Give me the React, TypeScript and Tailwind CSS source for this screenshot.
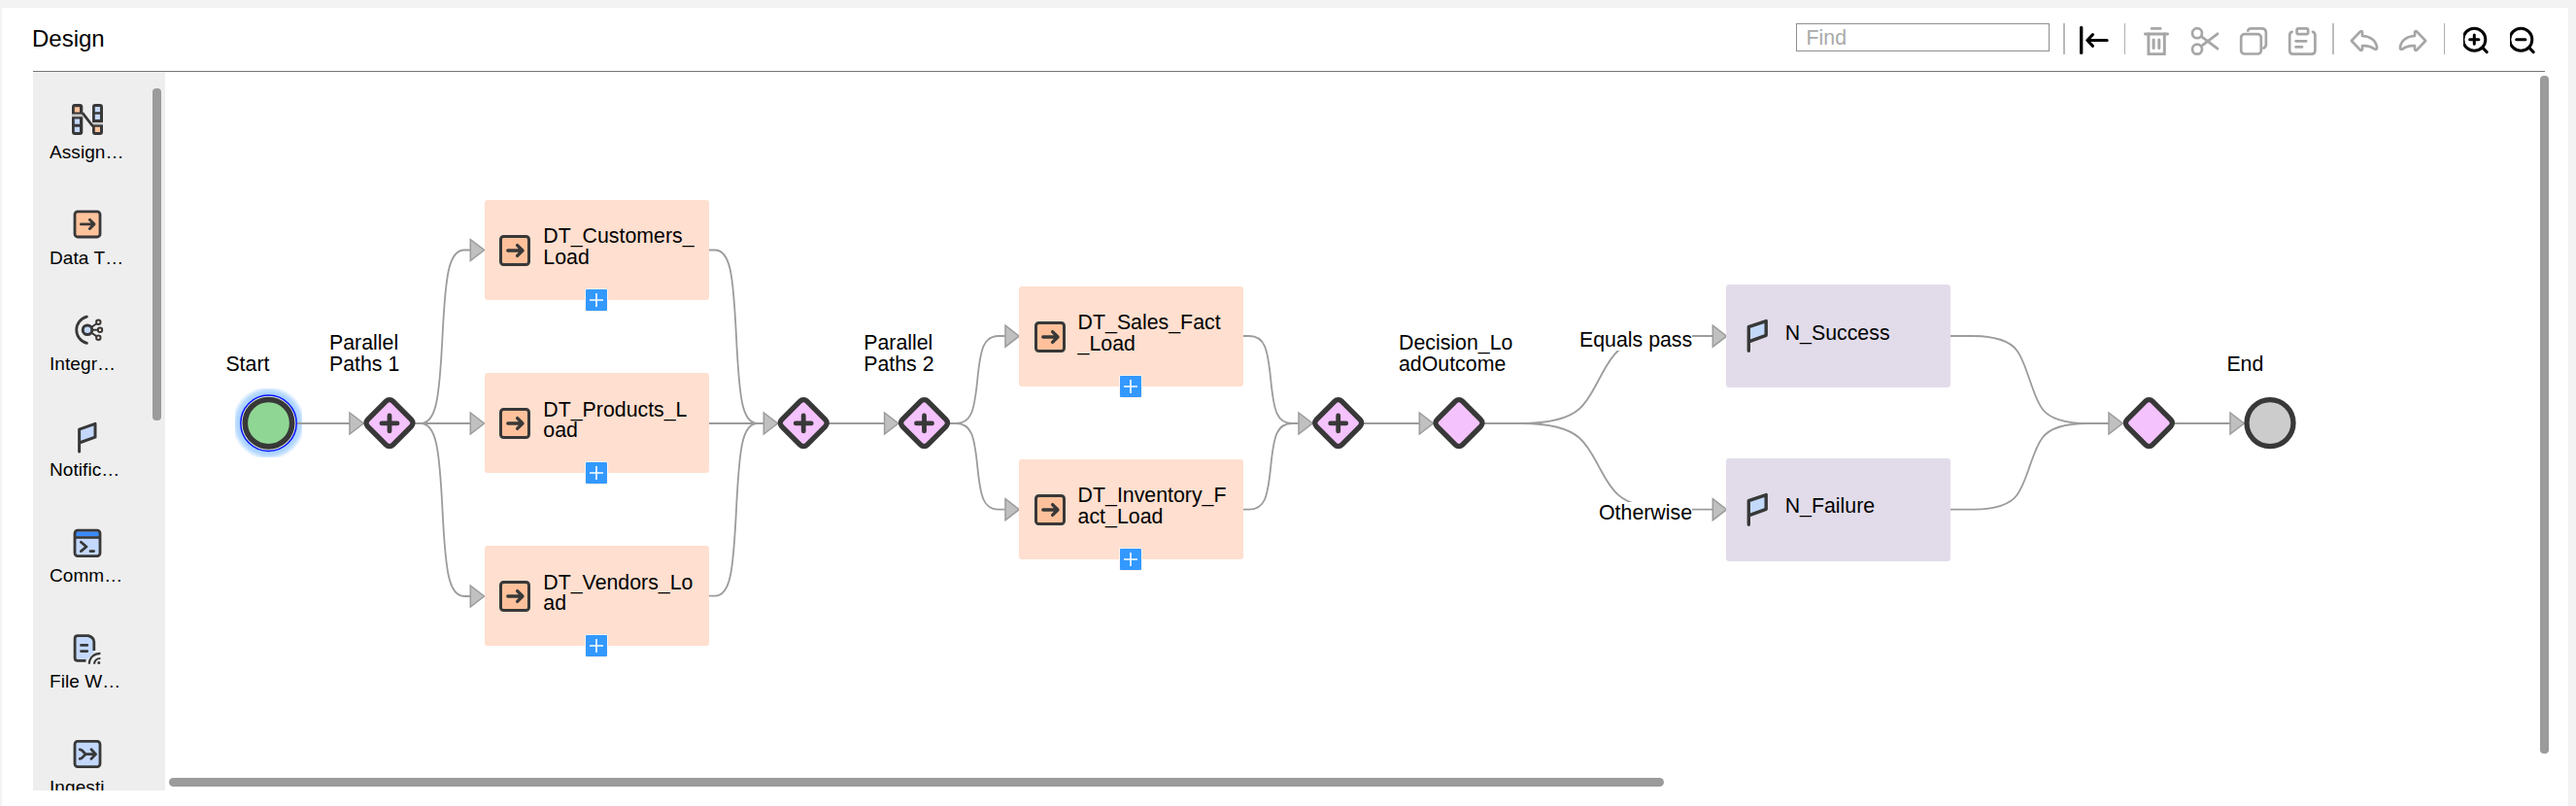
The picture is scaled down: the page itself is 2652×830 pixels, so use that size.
import type { ReactNode } from "react";

const DARK = "#383838";
const LINE = "#9c9c9c";

/* Canvas origin inside the page; diagram data uses page coordinates. */
const OX = 170;
const OY = 74;
const MID = 436;

/* ---------- toolbar ---------- */

function Tool({ label, muted, children }: { label: string; muted?: boolean; children: ReactNode }) {
  return (
    <button aria-label={label} className={muted ? "mt-0.5 h-8 w-8 shrink-0 text-[#a6a6a6]" : "mt-0.5 h-8 w-8 shrink-0 text-black"}>
      <svg className="block h-8 w-8" viewBox="0 0 32 32" fill="none" stroke="currentColor" strokeWidth="2.7" strokeLinecap="round" strokeLinejoin="round">
        {children}
      </svg>
    </button>
  );
}

const replyArrow =
  "M2.9 16 L12 6.4 Q13.7 5.6 14 7.4 V11 C22 11.3 28 15.5 29 22.5 C29.2 24.8 28 25.4 26.4 24.4 C23 21.8 19 20.8 14 21.2 V24.6 Q13.7 26.4 12 25.6 Z";

function Toolbar() {
  return (
    <div className="flex items-start">
      <input
        className="h-[29px] w-[261px] border border-[#8f8f8f] bg-white pt-px pl-[9.5px] text-[21.33px] leading-[26px] placeholder:text-[#a9a9a9] placeholder:opacity-100"
        placeholder="Find"
      />
      <div className="mr-3.5 ml-3.5 h-8 w-0.5 bg-[#b8b8b8]" />
      <Tool label="Collapse">
        <path d="M2.7 2.4V28.4" strokeWidth="3.3" />
        <path d="M9 15.5H29.2M14.5 9.6L8.8 15.5L14.5 21.4" strokeWidth="3" />
      </Tool>
      <div className="mr-4 ml-[15px] h-8 w-px bg-[#b0b0b0]" />
      <div className="flex gap-[18px]">
        <Tool label="Delete" muted>
          <path d="M11.2 3.4H20.2M4.4 9H27.6" strokeWidth="2.8" />
          <path d="M7.9 9V29.6H24.3V9" strokeLinejoin="miter" strokeWidth="2.9" />
          <path d="M13.1 15V23.6M18.8 15V23.6" strokeWidth="3" />
        </Tool>
        <Tool label="Cut" muted>
          <circle cx="8" cy="8.2" r="5" />
          <circle cx="8" cy="24.7" r="5" />
          <path d="M12.4 11.6L29 24.2M12.4 21.4L29 8.8" />
        </Tool>
        <Tool label="Copy" muted>
          <rect x="3.2" y="9.1" width="20.6" height="20.4" rx="3.6" />
          <path d="M10.2 5.6Q11 3.4 13.5 3.4H24.5Q28.9 3.4 28.9 7.8V19.6Q28.9 22.6 26.4 23.6" />
        </Tool>
        <Tool label="Paste" muted>
          <path d="M5.6 6.8Q3.2 7.6 3.2 10.6V26Q3.2 29.6 6.8 29.6H25.8Q29.4 29.6 29.4 26V10.6Q29.4 7.6 27 6.8" />
          <rect x="10.6" y="3.4" width="11.6" height="5.8" rx="1.6" />
          <path d="M9.6 16.4H20.2M9.6 22.4H16" />
        </Tool>
      </div>
      <div className="mr-[15px] ml-[15px] h-8 w-0.5 bg-[#bcbcbc]" />
      <div className="flex gap-[18px]">
        <Tool label="Undo" muted>
          <path d={replyArrow} />
        </Tool>
        <Tool label="Redo" muted>
          <path d={replyArrow} transform="translate(32 0) scale(-1 1)" />
        </Tool>
      </div>
      <div className="mr-[19px] ml-4 h-8 w-px bg-[#b0b0b0]" />
      <div className="flex gap-4 pr-1">
        <Tool label="Zoom in">
          <circle cx="11.3" cy="14.7" r="11.5" strokeWidth="3" />
          <path d="M20 23.4L24.2 27.6M6.7 14.7H15.9M11.3 10.1V19.3" strokeWidth="3" />
        </Tool>
        <Tool label="Zoom out">
          <circle cx="11.3" cy="14.7" r="11.5" strokeWidth="3" />
          <path d="M20 23.4L24.2 27.6M6.7 14.7H15.9" strokeWidth="3" />
        </Tool>
      </div>
    </div>
  );
}

/* ---------- palette ---------- */

const palette: { name: string; icon: ReactNode }[] = [
  {
    name: "Assign…",
    icon: (
      <>
        <rect x="2" y="12" width="11" height="4" fill="#c6c6c6" />
        <rect x="23" y="20.6" width="11" height="4" fill="#c6c6c6" />
        <path d="M2 12.4V5Q2 2 5 2H10.3Q13.3 2 13.3 5V12.4ZM2 15.2H13.3V31Q13.3 34 10.3 34H5Q2 34 2 31ZM23 21V5Q23 2 26 2H31Q34 2 34 5V21ZM23 23.6H34V31Q34 34 31 34H26Q23 34 23 31Z" fill={DARK} />
        <path d="M13 11.4L23.5 25" stroke={DARK} strokeWidth="2.8" />
        <path d="M4.8 5.3h5.2v5.2H4.8zM25.8 25.8h5.2v5.2h-5.2z" fill="#ffc39c" />
        <path d="M4.8 17.6h5.2v5.2H4.8zM4.8 25.8h5.2v5.2H4.8zM25.8 5h5.2v5.2h-5.2zM25.8 12.8h5.2v5.2h-5.2z" fill="#c3d8fb" />
      </>
    ),
  },
  {
    name: "Data T…",
    icon: (
      <>
        <rect x="5" y="3.8" width="26" height="26.2" rx="3" fill="#ffc39c" stroke={DARK} strokeWidth="2.8" />
        <path d="M11.4 16.9H24.5M20.4 12.3L25 16.9L20.4 21.5" stroke={DARK} strokeWidth="2.9" strokeLinecap="round" strokeLinejoin="round" />
      </>
    ),
  },
  {
    name: "Integr…",
    icon: (
      <>
        <path d="M17.4 3.2A14 14 0 0 0 17.4 30.4" stroke={DARK} strokeWidth="2.8" strokeLinecap="round" />
        <path d="M18 16.8L29.3 9M18 16.8H31M18 16.8L29.3 24.6" stroke={DARK} strokeWidth="2" />
        <circle cx="18" cy="16.8" r="4.8" fill="#c3d8fb" stroke={DARK} strokeWidth="3" />
        <g fill="#ffe8dc" stroke={DARK} strokeWidth="2">
          <circle cx="29.3" cy="8.8" r="2.2" />
          <circle cx="31" cy="16.8" r="2.2" />
          <circle cx="29.3" cy="24.7" r="2.2" />
        </g>
      </>
    ),
  },
  {
    name: "Notific…",
    icon: (
      <path d="M9.6 33V10.2L26 4.3V18.2L9.6 24" fill="#c3d8fb" stroke={DARK} strokeWidth="3" strokeLinecap="round" strokeLinejoin="round" />
    ),
  },
  {
    name: "Comm…",
    icon: (
      <>
        <rect x="5" y="5.2" width="26" height="26.4" rx="3" fill="#c3d8fb" />
        <rect x="6" y="6.4" width="24" height="5" fill="#3a8bff" />
        <path d="M5 12.5H31" stroke={DARK} strokeWidth="2.6" />
        <rect x="5" y="5.2" width="26" height="26.4" rx="3" stroke={DARK} strokeWidth="2.8" />
        <path d="M11.4 17.2L17 22L11.4 26.6M21 26.6H24.6" stroke={DARK} strokeWidth="2.8" strokeLinecap="round" strokeLinejoin="round" />
      </>
    ),
  },
  {
    name: "File W…",
    icon: (
      <>
        <path d="M8 4.6H19.5L24.8 10V22L16 30.4H8Q5.1 30.4 5.1 27.5V7.5Q5.1 4.6 8 4.6Z" fill="#c3d8fb" />
        <path d="M16.5 30.4H8Q5.1 30.4 5.1 27.5V7.5Q5.1 4.6 8 4.6H19Q24.8 6.5 24.8 11V20" stroke={DARK} strokeWidth="2.8" />
        <path d="M11.5 14.4H17.8M11.5 20.6H17.8" stroke={DARK} strokeWidth="2.8" strokeLinecap="round" />
        <path d="M19.8 33.8C20 27 25 22.8 31.4 22.8M25 33.8C25.2 30.2 28 28 31.4 28" stroke={DARK} strokeWidth="2.2" />
        <circle cx="29.8" cy="32.4" r="1.5" fill={DARK} />
      </>
    ),
  },
  {
    name: "Ingesti…",
    icon: (
      <>
        <rect x="5" y="4.4" width="26" height="26.2" rx="3" fill="#c3d8fb" stroke={DARK} strokeWidth="2.8" />
        <path d="M10.2 12.8C14 12.8 14 17.6 17 17.6C14 17.6 14 22.4 10.2 22.4M16.5 17.6H26M22 12.8L26.6 17.6L22 22.4" stroke={DARK} strokeWidth="2.8" strokeLinecap="round" strokeLinejoin="round" />
      </>
    ),
  },
];

function Palette() {
  return (
    <aside className="flex h-[740px] w-[136px] shrink-0 overflow-hidden bg-[#eeeeee]">
      <div className="w-[123px] pt-[31px]">
        {palette.map((p) => (
          <div key={p.name} className="h-[109px] pl-[17px]">
            <svg className="ml-[21px] block h-9 w-9" viewBox="0 0 36 36" fill="none">
              {p.icon}
            </svg>
            <div className="mt-1 text-[19px] leading-6 tracking-[0.08px] whitespace-nowrap text-black">{p.name}</div>
          </div>
        ))}
      </div>
      <div className="mt-[17px] h-[342px] w-[9px] rounded-[4px] bg-[#9b9b9b]" />
    </aside>
  );
}

/* ---------- diagram ---------- */

function TransferIcon() {
  return (
    <svg className="block h-8 w-8 shrink-0" viewBox="0 0 32 32" fill="none">
      <rect x="1.5" y="1.5" width="29" height="29" rx="3" fill="#ffc19b" stroke={DARK} strokeWidth="3" />
      <path d="M8.8 16H23M18.6 10.6L24 16L18.6 21.4" stroke={DARK} strokeWidth="3.3" strokeLinecap="round" strokeLinejoin="round" />
    </svg>
  );
}

function FlagIcon() {
  return (
    <svg className="block h-9 w-8 shrink-0" viewBox="0 0 32 36" fill="none">
      <path d="M7.3 33.2V8.7L25.2 2.6V17.3L7.3 23.8" fill="#c3d9fa" stroke={DARK} strokeWidth="3.4" strokeLinecap="round" strokeLinejoin="round" />
    </svg>
  );
}

type Task = { x: number; y: number; h: number; kind: "dt" | "note"; lines: string[] };

const tasks: Task[] = [
  { x: 499, y: 206, h: 103, kind: "dt", lines: ["DT_Customers_", "Load"] },
  { x: 499, y: 384.4, h: 103, kind: "dt", lines: ["DT_Products_L", "oad"] },
  { x: 499, y: 562.4, h: 103, kind: "dt", lines: ["DT_Vendors_Lo", "ad"] },
  { x: 1049.3, y: 295, h: 103, kind: "dt", lines: ["DT_Sales_Fact", "_Load"] },
  { x: 1049.3, y: 473.3, h: 103, kind: "dt", lines: ["DT_Inventory_F", "act_Load"] },
  { x: 1777.4, y: 293, h: 106.4, kind: "note", lines: ["N_Success"] },
  { x: 1777.4, y: 471.6, h: 106.4, kind: "note", lines: ["N_Failure"] },
];

function TaskBox({ task }: { task: Task }) {
  const dt = task.kind === "dt";
  return (
    <div
      className={
        dt
          ? "absolute flex w-[230.6px] items-center gap-[13px] rounded-[3px] bg-[#ffdfcf] pl-[15.3px]"
          : "absolute flex w-[230.6px] items-center gap-[13px] rounded-[3px] bg-[#e2dcea] pl-[15.3px]"
      }
      style={{ left: task.x - OX, top: task.y - OY, height: task.h }}
    >
      {dt ? <TransferIcon /> : <FlagIcon />}
      <div className="pb-1.5 text-[21.33px] leading-[21.33px] whitespace-nowrap text-black">
        {task.lines.map((l) => (
          <div key={l}>{l}</div>
        ))}
      </div>
      {dt && (
        <svg className="absolute -bottom-3 left-[103px] h-6 w-6" viewBox="0 0 24 24">
          <rect width="24" height="24" rx="2" fill="#fff5f0" />
          <rect x="1" y="1" width="22" height="22" rx="1" fill="#3399ff" />
          <path d="M5 12H19M12 5V19" stroke="#fff" strokeWidth="1.6" />
        </svg>
      )}
    </div>
  );
}

type Caption = { x: number; base: number; lines: string[]; onEdge?: boolean };

const captions: Caption[] = [
  { x: 232.4, base: 382, lines: ["Start"] },
  { x: 339, base: 360, lines: ["Parallel", "Paths 1"] },
  { x: 889.2, base: 360, lines: ["Parallel", "Paths 2"] },
  { x: 1440, base: 360, lines: ["Decision_Lo", "adOutcome"] },
  { x: 1626, base: 357, lines: ["Equals pass"], onEdge: true },
  { x: 1646, base: 534.7, lines: ["Otherwise"], onEdge: true },
  { x: 2292.4, base: 382, lines: ["End"] },
];

/* S-curve through a steep middle section, flat at both ends. */
function narrow(x0: number, y0: number, x1: number, y1: number) {
  const a = x0 + 6;
  const b = x1 - 6;
  const mx = (a + b) / 2;
  const my = (y0 + y1) / 2;
  const d = (my - y0) * 0.28;
  return `M${x0} ${y0}H${a}C${a + 16} ${y0} ${mx - 3.2} ${y0 + d} ${mx} ${my}C${mx + 3.2} ${y1 - d} ${b - 16} ${y1} ${b} ${y1}H${x1}`;
}

/* Longer S-curve with a soft shoulder on either side of the middle. */
function wide(x0: number, y0: number, x1: number, y1: number, mx: number, reach: number, shoulder: number) {
  const s = y1 > y0 ? 1 : -1;
  const my = (y0 + y1) / 2;
  const a = mx - reach;
  const b = mx + reach;
  const sx = mx - shoulder;
  const ex = mx + shoulder;
  const k = (reach - shoulder) * 0.5;
  const out = shoulder * 0.45;
  const inn = out * 1.27;
  return [
    `M${x0} ${y0}H${a}`,
    `C${a + k} ${y0} ${sx - inn} ${y0 + s * 4.8} ${sx} ${y0 + s * 15}`,
    `C${sx + out} ${y0 + s * 23} ${mx - shoulder * 0.3} ${my - s * 11} ${mx} ${my}`,
    `C${mx + shoulder * 0.3} ${my + s * 11} ${ex - out} ${y1 - s * 23} ${ex} ${y1 - s * 15}`,
    `C${ex + inn} ${y1 - s * 4.8} ${b - k} ${y1} ${b} ${y1}H${x1}`,
  ].join("");
}

const edges = [
  `M305 ${MID}H360`,
  `M427 ${MID}H484`,
  narrow(427, MID, 484, 257.5),
  narrow(427, MID, 484, 614),
  `M730 ${MID}H786`,
  narrow(730, 257.5, 786, MID),
  narrow(730, 613.7, 786, MID),
  `M853 ${MID}H910`,
  narrow(978, MID, 1034.5, 346),
  narrow(978, MID, 1034.5, 524.7),
  narrow(1280, 346, 1336.5, MID),
  narrow(1280, 524.7, 1336.5, MID),
  `M1404 ${MID}H1461`,
  wide(1528, MID, 1763, 346, 1646, 80, 20),
  wide(1528, MID, 1763, 524.7, 1646, 80, 20),
  wide(2008, 346, 2171, MID, 2089.5, 60, 13),
  wide(2008, 524.7, 2171, MID, 2089.5, 60, 13),
  `M2239 ${MID}H2296`,
];

const arrows: [number, number][] = [
  [360, MID],
  [484.3, 257.5],
  [484.3, MID],
  [484.3, 614],
  [786.3, MID],
  [910.6, MID],
  [1035, 346.2],
  [1035, 524.7],
  [1337, MID],
  [1461.3, MID],
  [1763.3, 346.2],
  [1763.3, 524.7],
  [2171, MID],
  [2296, MID],
];

const gateways: { x: number; plus: boolean }[] = [
  { x: 401, plus: true },
  { x: 827.2, plus: true },
  { x: 951.5, plus: true },
  { x: 1377.7, plus: true },
  { x: 1502, plus: false },
  { x: 2212.4, plus: false },
];

function Diagram() {
  return (
    <div className="relative h-[727px] w-[2445px] overflow-hidden">
      <svg className="absolute inset-0" width="2445" height="727" viewBox="170 74 2445 727" fill="none">
        <defs>
          <radialGradient id="glow" cx="276.5" cy="435.7" r="38" gradientUnits="userSpaceOnUse">
            <stop offset="0.8" stopColor="#a9d2ff" />
            <stop offset="0.88" stopColor="#bcdcff" />
            <stop offset="1" stopColor="#bcdcff" stopOpacity="0" />
          </radialGradient>
        </defs>
        <rect x="242" y="400" width="69" height="71" fill="url(#glow)" />
        <path d={edges.join("")} stroke={LINE} strokeWidth="1.8" />
        {arrows.map(([x, y]) => (
          <path key={`${x}-${y}`} d={`M${x} ${y - 11}L${x + 14.3} ${y}L${x} ${y + 11}Z`} fill="#c0c0c0" stroke="#9c9c9c" strokeWidth="1.5" />
        ))}
        <circle cx="276.5" cy="435.7" r="28.7" fill="#dce9e0" stroke="#0a14ff" strokeWidth="1.5" />
        <circle cx="276.5" cy="435.7" r="24.2" fill="#8fd694" stroke={DARK} strokeWidth="5.6" />
        <circle cx="2337" cy="435.6" r="24" fill="#cccccc" stroke={DARK} strokeWidth="5.3" />
        {gateways.map((g) => (
          <g key={g.x} transform={`translate(${g.x} 435.6)`}>
            <rect x="-18.4" y="-18.4" width="36.8" height="36.8" rx="5" transform="rotate(45)" fill="#f4c2fc" stroke={DARK} strokeWidth="5.4" />
            {g.plus && <path d="M-8 0.3H8M0 -7.7V8.3" stroke={DARK} strokeWidth="4.8" strokeLinecap="round" />}
          </g>
        ))}
      </svg>
      {tasks.map((t) => (
        <TaskBox key={t.lines[0]} task={t} />
      ))}
      {captions.map((c) => (
        <div
          key={c.lines.join("")}
          className={
            c.onEdge
              ? "absolute bg-white text-[21.33px] leading-[22px] whitespace-nowrap text-black"
              : "absolute text-[21.33px] leading-[22px] whitespace-nowrap text-black"
          }
          style={{ left: c.x - OX, top: c.base - 18 - OY }}
        >
          {c.lines.map((l) => (
            <div key={l}>{l}</div>
          ))}
        </div>
      ))}
    </div>
  );
}

export default function App() {
  return (
    <div className="h-[830px] w-[2652px] overflow-hidden bg-[#f3f3f3] pt-2 pr-2 pl-0.5 font-['Liberation_Sans',Arial,sans-serif]">
      <div className="h-[822px] bg-white pl-8">
        <header className="flex h-[66px] w-[2586px] justify-between border-b border-[#767676] pt-4">
          <h1 className="mt-0.5 -ml-px text-[24px] leading-[28px] text-black">Design</h1>
          <Toolbar />
        </header>
        <div className="flex">
          <Palette />
          <main className="flex w-[2454px]">
            <div className="flex flex-col">
              <Diagram />
              <div className="ml-1 h-[9px] w-[1539px] rounded-[4.5px] bg-[#9b9b9b]" />
            </div>
            <div className="mt-1 h-[698px] w-[9px] shrink-0 rounded-[4px] bg-[#9b9b9b]" />
          </main>
        </div>
      </div>
    </div>
  );
}
